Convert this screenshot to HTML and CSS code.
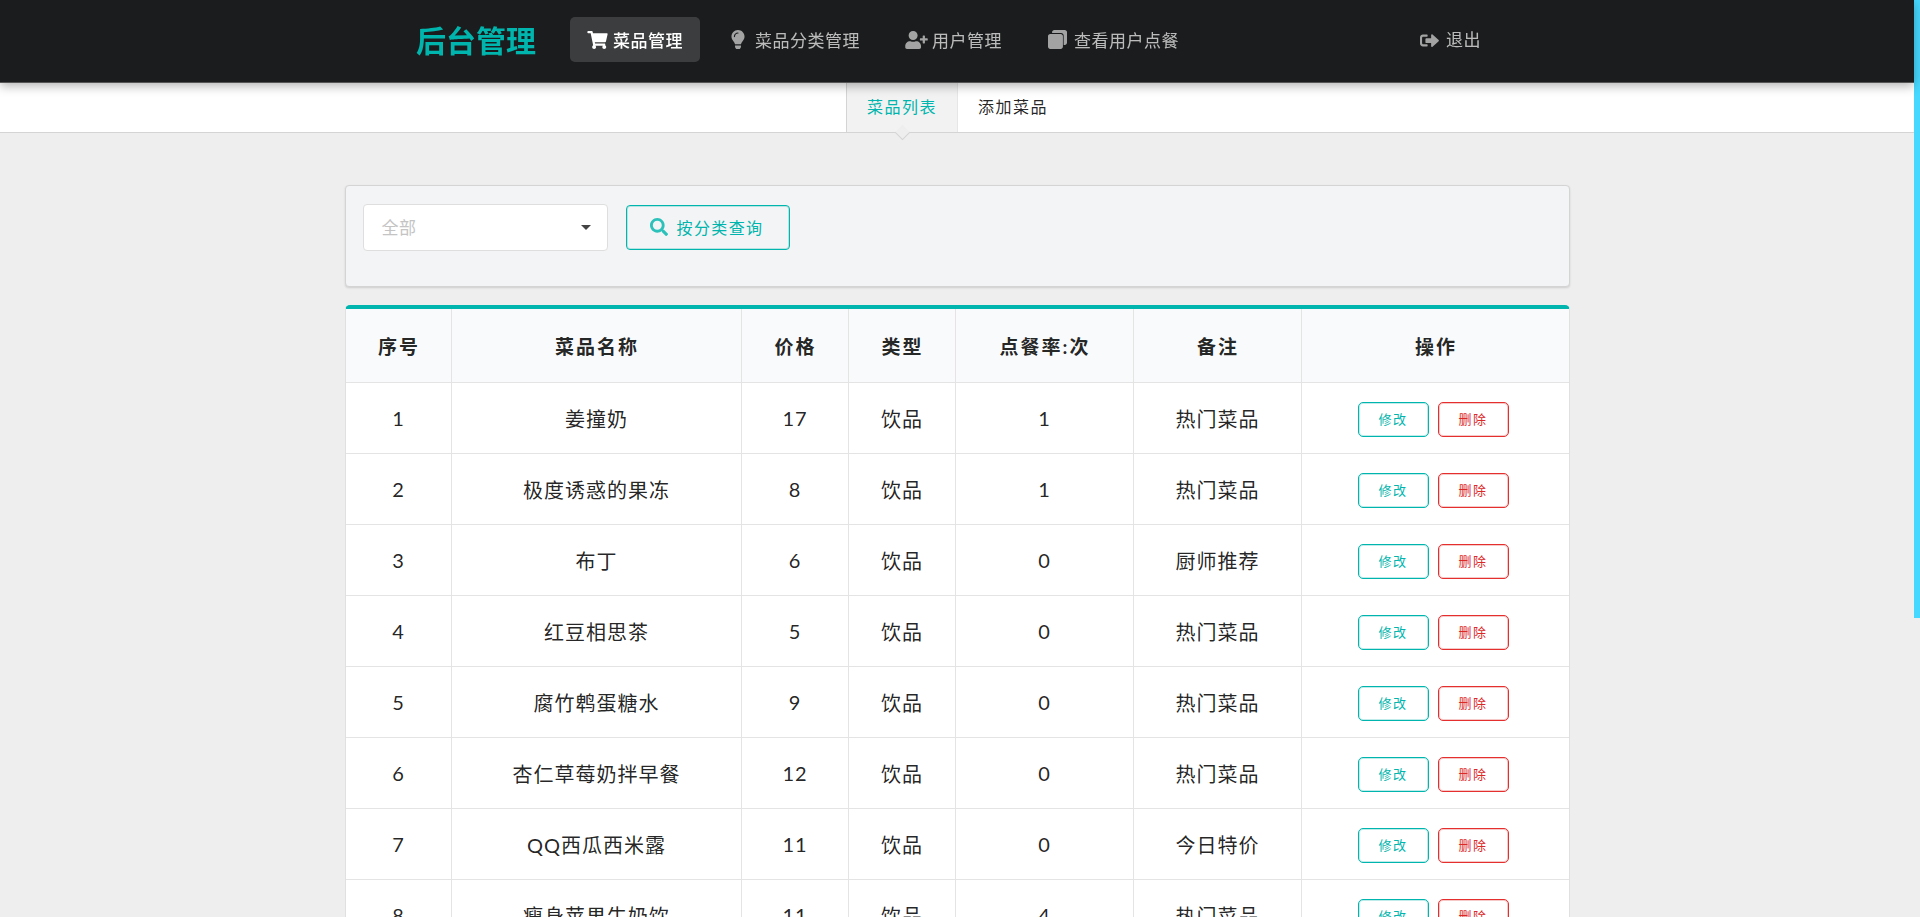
FILE: index.html
```html
<!DOCTYPE html>
<html lang="zh-CN">
<head>
<meta charset="utf-8">
<title>后台管理</title>
<link rel="stylesheet" href="styles.css">
</head>
<body>
<nav class="topnav">
  <div class="brand">后台管理</div>
  <a class="nav-item active"><svg class="ico ico-cart" viewBox="0 0 576 512"><path d="M528.12 301.319l47.273-208C578.806 78.301 567.391 64 551.99 64H159.208l-9.166-44.81C147.758 8.021 137.93 0 126.529 0H24C10.745 0 0 10.745 0 24v16c0 13.255 10.745 24 24 24h69.883l70.248 343.435C147.325 417.1 136 435.222 136 456c0 30.928 25.072 56 56 56s56-25.072 56-56c0-15.674-6.447-29.835-16.824-40h209.647C430.447 426.165 424 440.326 424 456c0 30.928 25.072 56 56 56s56-25.072 56-56c0-22.172-12.888-41.332-31.579-50.405l5.517-24.276c3.413-15.018-8.002-29.319-23.403-29.319H218.117l-6.545-32h293.145c11.206 0 20.92-7.754 23.403-18.681z"/></svg>菜品管理</a>
  <a class="nav-item"><svg class="ico ico-bulb" viewBox="0 0 352 512"><path d="M96.06 454.35c.01 6.29 1.87 12.45 5.36 17.69l17.09 25.69a31.99 31.99 0 0 0 26.64 14.28h61.71a31.99 31.99 0 0 0 26.64-14.28l17.09-25.69a31.989 31.989 0 0 0 5.36-17.69l.04-38.35H96.01l.05 38.35zM0 176c0 44.37 16.45 84.85 43.56 115.78 16.52 18.85 42.36 58.23 52.21 91.45.04.26.07.52.11.78h160.24c.04-.26.07-.51.11-.78 9.85-33.22 35.69-72.6 52.21-91.45C335.55 260.85 352 220.37 352 176 352 78.61 272.91-.3 175.45 0 73.44.31 0 82.97 0 176zm176-80c-44.11 0-80 35.89-80 80 0 8.84-7.16 16-16 16s-16-7.16-16-16c0-61.76 50.24-112 112-112 8.84 0 16 7.16 16 16s-7.16 16-16 16z"/></svg>菜品分类管理</a>
  <a class="nav-item"><svg class="ico ico-user" viewBox="0 0 640 512"><path d="M624 208h-64v-64c0-8.8-7.2-16-16-16h-32c-8.8 0-16 7.2-16 16v64h-64c-8.8 0-16 7.2-16 16v32c0 8.8 7.2 16 16 16h64v64c0 8.8 7.2 16 16 16h32c8.8 0 16-7.2 16-16v-64h64c8.8 0 16-7.2 16-16v-32c0-8.8-7.2-16-16-16zm-400 48c70.7 0 128-57.3 128-128S294.7 0 224 0 96 57.3 96 128s57.3 128 128 128zm89.6 32h-16.7c-22.2 10.2-46.9 16-72.9 16s-50.6-5.8-72.9-16h-16.7C60.2 288 0 348.2 0 422.4V464c0 26.5 21.5 48 48 48h352c26.5 0 48-21.5 48-48v-41.6c0-74.2-60.2-134.4-134.4-134.4z"/></svg>用户管理</a>
  <a class="nav-item"><svg class="ico ico-clone" viewBox="0 0 512 512"><path d="M170 0h282c33 0 60 27 60 60v282c0 33-27 60-60 60h-30V150c0-40-30-70-70-70H110V60c0-33 27-60 60-60zM60 110h282c33 0 60 27 60 60v282c0 33-27 60-60 60H60c-33 0-60-27-60-60V170c0-33 27-60 60-60z"/></svg>查看用户点餐</a>
  <a class="nav-item logout"><svg class="ico ico-exit" viewBox="0 0 512 512"><path d="M80 96h110c9 0 16 7 16 16v24c0 9-7 16-16 16H90c-20 0-34 14-34 34v140c0 20 14 34 34 34h100c9 0 16 7 16 16v24c0 9-7 16-16 16H80c-44 0-80-36-80-80V176c0-44 36-80 80-80zM300 110c0-20 24-30 38-16l165 150c9 8 9 22 0 30L338 424c-14 14-38 4-38-16v-84H170c-13 0-24-11-24-24v-80c0-13 11-24 24-24h130z"/></svg>退出</a>
</nav>

<div class="subnav">
  <a class="tab current">菜品列表</a>
  <a class="tab">添加菜品</a>
</div>

<main class="content">
  <section class="filter">
    <div class="select"><span>全部</span><i class="caret"></i></div>
    <button class="search-btn"><svg class="ico-search" viewBox="0 0 512 512"><path d="M505 442.7L405.3 343c-4.5-4.5-10.6-7-17-7H372c27.6-35.3 44-79.7 44-128C416 93.1 322.9 0 208 0S0 93.1 0 208s93.1 208 208 208c48.3 0 92.7-16.4 128-44v16.3c0 6.4 2.5 12.5 7 17l99.7 99.7c9.4 9.4 24.6 9.4 33.9 0l28.3-28.3c9.4-9.4 9.4-24.6.1-34zM208 336c-70.7 0-128-57.2-128-128 0-70.7 57.2-128 128-128 70.7 0 128 57.2 128 128 0 70.7-57.2 128-128 128z"/></svg>按分类查询</button>
  </section>

  <table class="dishes">
    <colgroup>
      <col class="c1"><col class="c2"><col class="c3"><col class="c4"><col class="c5"><col class="c6"><col class="c7">
    </colgroup>
    <thead>
      <tr><th>序号</th><th>菜品名称</th><th>价格</th><th>类型</th><th>点餐率:次</th><th>备注</th><th>操作</th></tr>
    </thead>
    <tbody>
      <tr><td>1</td><td>姜撞奶</td><td>17</td><td>饮品</td><td>1</td><td>热门菜品</td><td class="ops"><button class="btn edit">修改</button><button class="btn del">删除</button></td></tr>
      <tr><td>2</td><td>极度诱惑的果冻</td><td>8</td><td>饮品</td><td>1</td><td>热门菜品</td><td class="ops"><button class="btn edit">修改</button><button class="btn del">删除</button></td></tr>
      <tr><td>3</td><td>布丁</td><td>6</td><td>饮品</td><td>0</td><td>厨师推荐</td><td class="ops"><button class="btn edit">修改</button><button class="btn del">删除</button></td></tr>
      <tr><td>4</td><td>红豆相思茶</td><td>5</td><td>饮品</td><td>0</td><td>热门菜品</td><td class="ops"><button class="btn edit">修改</button><button class="btn del">删除</button></td></tr>
      <tr><td>5</td><td>腐竹鹎蛋糖水</td><td>9</td><td>饮品</td><td>0</td><td>热门菜品</td><td class="ops"><button class="btn edit">修改</button><button class="btn del">删除</button></td></tr>
      <tr><td>6</td><td>杏仁草莓奶拌早餐</td><td>12</td><td>饮品</td><td>0</td><td>热门菜品</td><td class="ops"><button class="btn edit">修改</button><button class="btn del">删除</button></td></tr>
      <tr><td>7</td><td>QQ西瓜西米露</td><td>11</td><td>饮品</td><td>0</td><td>今日特价</td><td class="ops"><button class="btn edit">修改</button><button class="btn del">删除</button></td></tr>
      <tr><td>8</td><td>瘦身苹果牛奶饮</td><td>11</td><td>饮品</td><td>4</td><td>热门菜品</td><td class="ops"><button class="btn edit">修改</button><button class="btn del">删除</button></td></tr>
    </tbody>
  </table>
</main>
<div class="scroll-thumb"></div>
</body>
</html>
```
FILE: styles.css
```css
* { box-sizing: border-box; }
html { background: #eee; }
body {
  margin: 0;
  padding-right: 6px;
  background: #eee;
  font-family: Lato, "Noto Sans CJK SC", sans-serif;
  color: rgba(0, 0, 0, 0.87);
}
.scroll-thumb {
  position: fixed;
  top: 0;
  right: 0;
  width: 6px;
  height: 618px;
  background: #46d8ff;
}
.topnav {
  position: relative;
  z-index: 2;
  display: flex;
  align-items: center;
  gap: 12px;
  height: 83px;
  padding: 0 433px 3px 416px;
  background: #1b1c1d;
  border-bottom: 1px solid #555;
  box-shadow: 0 3px 10px rgba(0, 0, 0, 0.3);
}
.brand {
  font-size: 30px;
  font-weight: 700;
  color: #00b5ad;
  width: 142px;
  line-height: 40px;
}
.nav-item {
  display: flex;
  align-items: center;
  height: 45px;
  padding: 0 17px;
  border-radius: 5px;
  font-size: 17px;
  letter-spacing: 0.5px;
  color: rgba(255, 255, 255, 0.7);
}
.nav-item.active {
  background: rgba(255, 255, 255, 0.15);
  color: #fff;
  font-weight: 500;
}
.ico { fill: currentColor; flex: none; opacity: 0.85; }
.active .ico { opacity: 1; }
.ico-cart { width: 21px; height: 18px; margin-right: 5px; }
.ico-bulb { width: 14px; height: 19px; margin-left: 2px; margin-right: 10px; }
.ico-user { width: 23px; height: 18px; margin-left: -1px; margin-right: 4px; }
.ico-clone { width: 19px; height: 19px; margin-right: 7px; }
.ico-exit { width: 19px; height: 19px; margin-right: 7px; margin-top: 5px; }
.logout { margin-left: auto; padding: 0 0 3px 0; }
.subnav {
  display: flex;
  justify-content: center;
  height: 50px;
  background: #fff;
  border-bottom: 1px solid #d4d4d5;
}
.tab {
  position: relative;
  display: flex;
  align-items: center;
  padding: 0 20px 3px;
  font-size: 16px;
  letter-spacing: 1.5px;
  color: rgba(0, 0, 0, 0.87);
}
.tab.current {
  color: #00b5ad;
  background: #f2f2f2;
  border-left: 1px solid #d4d4d5;
  border-right: 1px solid #e6e6e6;
}
.tab.current::after {
  content: "";
  position: absolute;
  left: 50%;
  bottom: -6px;
  width: 10px;
  height: 10px;
  margin-left: -5px;
  background: #eee;
  border-right: 1px solid #d4d4d5;
  border-bottom: 1px solid #d4d4d5;
  transform: rotate(45deg);
}
.content {
  width: 1225px;
  margin: 52px auto 0;
}
.filter {
  display: flex;
  align-items: flex-start;
  gap: 18px;
  height: 102px;
  padding: 18px 17px;
  background: #f3f4f5;
  border: 1px solid #d4d4d5;
  border-radius: 4px;
  box-shadow: 0 1px 2px rgba(34, 36, 38, 0.15);
}
.select {
  display: flex;
  align-items: center;
  justify-content: space-between;
  width: 245px;
  height: 47px;
  padding: 0 16px 2px 18px;
  background: #fff;
  border: 1px solid #dedede;
  border-radius: 4px;
  font-size: 17px;
  letter-spacing: 0.5px;
  color: #c4c4c4;
}
.caret {
  width: 0;
  height: 0;
  margin-top: 2px;
  border-left: 5px solid transparent;
  border-right: 5px solid transparent;
  border-top: 5px solid #444;
}
.search-btn {
  display: flex;
  align-items: center;
  width: 164px;
  height: 45px;
  margin-top: 1px;
  padding: 0 0 2px 23px;
  background: transparent;
  border: 1px solid #00b5ad;
  border-radius: 4px;
  box-shadow: inset 0 0 0 1px rgba(0, 181, 173, 0.25);
  font-family: inherit;
  font-size: 16px;
  letter-spacing: 1.4px;
  color: #00b5ad;
}
.ico-search { width: 18px; height: 18px; margin-right: 9px; fill: #2cc1ba; }
.dishes {
  width: 1225px;
  margin-top: 18px;
  margin-bottom: 40px;
  border-collapse: separate;
  border-spacing: 0;
  table-layout: fixed;
  background: #fff;
  border: 1px solid #e0e0e0;
  border-top: 4px solid #00b5ad;
  border-radius: 5px;
}
.c1 { width: 106px; }
.c2 { width: 290px; }
.c3 { width: 107px; }
.c4 { width: 107px; }
.c5 { width: 178px; }
.c6 { width: 168px; }
.c7 { width: auto; }
th, td {
  padding: 0 0 0 1px;
  text-align: center;
  border-right: 1px solid #e4e4e4;
  border-bottom: 1px solid #e4e4e4;
}
th:last-child, td:last-child { border-right: 0; }
th {
  height: 74px;
  padding-left: 2px;
  background: #f9fafb;
  font-size: 19px;
  font-weight: 700;
  letter-spacing: 2px;
}
td {
  height: 71px;
  font-size: 20px;
  letter-spacing: 1px;
  color: rgba(0, 0, 0, 0.87);
}
td.ops { padding: 3px 4px 0 0; }
.btn {
  width: 71px;
  height: 35px;
  padding: 0 0 2px;
  background: #fff;
  border: 1px solid;
  border-radius: 5px;
  font-family: inherit;
  font-size: 13px;
  letter-spacing: 1.5px;
}
.btn + .btn { margin-left: 9px; }
.edit { border-color: #00b5ad; box-shadow: inset 0 0 0 1px rgba(0, 181, 173, 0.25); color: #00b5ad; }
.del { border-color: #e52e2e; box-shadow: inset 0 0 0 1px rgba(219, 40, 40, 0.25); color: #db2828; }
```
